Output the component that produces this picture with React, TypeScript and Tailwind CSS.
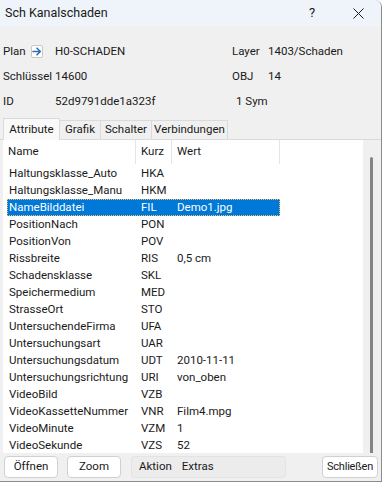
import { useState } from "react";

interface Row {
  name: string;
  kurz: string;
  wert?: string;
}

const rows: Row[] = [
  { name: "Haltungsklasse_Auto", kurz: "HKA" },
  { name: "Haltungsklasse_Manu", kurz: "HKM" },
  { name: "NameBilddatei", kurz: "FIL", wert: "Demo1.jpg" },
  { name: "PositionNach", kurz: "PON" },
  { name: "PositionVon", kurz: "POV" },
  { name: "Rissbreite", kurz: "RIS", wert: "0,5 cm" },
  { name: "Schadensklasse", kurz: "SKL" },
  { name: "Speichermedium", kurz: "MED" },
  { name: "StrasseOrt", kurz: "STO" },
  { name: "UntersuchendeFirma", kurz: "UFA" },
  { name: "Untersuchungsart", kurz: "UAR" },
  { name: "Untersuchungsdatum", kurz: "UDT", wert: "2010-11-11" },
  { name: "Untersuchungsrichtung", kurz: "URI", wert: "von_oben" },
  { name: "VideoBild", kurz: "VZB" },
  { name: "VideoKassetteNummer", kurz: "VNR", wert: "Film4.mpg" },
  { name: "VideoMinute", kurz: "VZM", wert: "1" },
  { name: "VideoSekunde", kurz: "VZS", wert: "52" },
];

const tabs = ["Attribute", "Grafik", "Schalter", "Verbindungen"];

const ArrowButton = () => (
  <span className="inline-flex h-[13px] w-[12px] items-center justify-center rounded-[2px] border border-[#c8c8c8] bg-white">
    <svg width="10" height="9" viewBox="0 0 10 9" fill="none">
      <path d="M1 4.5h7M5 1.2l3.3 3.3L5 7.8" stroke="#2f6fb8" strokeWidth="1.6" strokeLinecap="round" strokeLinejoin="round" />
    </svg>
  </span>
);

const Button = ({ label, className }: { label: string; className: string }) => (
  <button type="button" className={`h-[22px] rounded-[4px] border border-[#d0d0d0] bg-white text-[11.5px] text-[#1a1a1a] ${className}`}>
    {label}
  </button>
);

export default function App() {
  const [selected, setSelected] = useState(2);
  const [activeTab, setActiveTab] = useState(0);

  return (
    <div
      className="flex h-[482px] w-[382px] flex-col overflow-hidden rounded-tr-[7px] border-r border-b border-[#8c8c8c] bg-[#f0f0f0] text-[11.5px] text-[#1a1a1a]"
      style={{ fontFamily: 'Roboto, "Liberation Sans", sans-serif' }}
    >
      {/* title bar */}
      <div className="flex h-[26px] shrink-0 items-center bg-[#eef4f9] pl-[5px]">
        <span className="flex-1 text-[12.5px]">Sch Kanalschaden</span>
        <span className="w-[46px] text-center text-[13px]">?</span>
        <span className="flex w-[46px] items-center justify-center">
          <svg width="11" height="11" viewBox="0 0 11 11">
            <path d="M0.5 0.5l10 10M10.5 0.5l-10 10" stroke="#1a1a1a" strokeWidth="1" />
          </svg>
        </span>
      </div>

      {/* header fields */}
      <div className="grid shrink-0 grid-cols-[52px_177px_36px_1fr] grid-rows-[25px_25px_25px] items-center pt-[13px] pl-[3px]">
        <span className="flex items-center gap-[5px]">
          Plan <ArrowButton />
        </span>
        <span>H0-SCHADEN</span>
        <span>Layer</span>
        <span>1403/Schaden</span>
        <span>Schlüssel</span>
        <span>14600</span>
        <span>OBJ</span>
        <span>14</span>
        <span>ID</span>
        <span>52d9791dde1a323f</span>
        <span className="col-span-2 pl-[4px]">1 Sym</span>
      </div>

      {/* tabs */}
      <div className="mt-[6px] flex h-[20px] shrink-0 items-end border-b border-[#dadada] pl-[3px]">
        {tabs.map((t, i) =>
          i === activeTab ? (
            <button
              key={t}
              type="button"
              onClick={() => setActiveTab(i)}
              className="relative -mb-px h-[22px] w-[57px] border border-b-0 border-[#dadada] bg-[#f9f9f9] text-[11.5px]"
            >
              {t}
            </button>
          ) : (
            <button
              key={t}
              type="button"
              onClick={() => setActiveTab(i)}
              className={`h-[19px] border border-b-0 border-l-0 border-[#dadada] bg-[#f0f0f0] text-[11.5px] ${
                i === 1 ? "w-[41px]" : i === 2 ? "w-[51px]" : "w-[76px]"
              }`}
            >
              {t}
            </button>
          ),
        )}
      </div>

      {/* list + scrollbar */}
      <div className="flex min-h-0 flex-1">
        <div className="ml-[3px] flex w-[360px] flex-col overflow-hidden bg-white">
          <div className="flex h-[24px] shrink-0 items-center">
            <span className="flex h-full w-[133px] items-center border-r border-[#e5e5e5] pl-[5px]">Name</span>
            <span className="flex h-full w-[36px] items-center border-r border-[#e5e5e5] pl-[5px]">Kurz</span>
            <span className="flex h-full w-[108px] items-center border-r border-[#e5e5e5] pl-[5px]">Wert</span>
          </div>
          <div className="pt-px">
            {rows.map((r, i) => (
              <div
                key={r.name}
                onClick={() => setSelected(i)}
                className={`ml-[4px] flex h-[17px] w-[273px] items-center ${
                  i === selected ? "border border-dotted border-[#f5c060] bg-[#0078d7] text-white" : "border border-transparent"
                }`}
              >
                <span className="w-[128px] pl-[1px] whitespace-nowrap">{r.name}</span>
                <span className="w-[36px] pl-[5px]">{r.kurz}</span>
                <span className="pl-[5px] whitespace-nowrap">{r.wert ?? ""}</span>
              </div>
            ))}
          </div>
        </div>
        <div className="relative w-[18px] bg-[#f0f0f0]">
          <div className="absolute top-[17px] bottom-0 left-[7px] w-[3px] rounded-t-full bg-[#858585]" />
        </div>
      </div>

      {/* bottom bar */}
      <div className="flex h-[28px] shrink-0 items-center pr-[3px] pl-[4px]">
        <Button label="Öffnen" className="w-[54px]" />
        <Button label="Zoom" className="ml-[9px] w-[54px]" />
        <div className="ml-[10px] flex h-[22px] w-[155px] items-center gap-[10px] rounded-[3px] border border-[#e3e3e3] bg-[#ececec] pl-[7px]">
          <span>Aktion</span>
          <span>Extras</span>
        </div>
        <button
          type="button"
          className="ml-auto h-[22px] w-[56px] rounded-[4px] border border-[#d0d0d0] bg-white text-[11px] tracking-[-0.2px] text-[#1a1a1a]"
        >
          Schließen
        </button>
      </div>
    </div>
  );
}
